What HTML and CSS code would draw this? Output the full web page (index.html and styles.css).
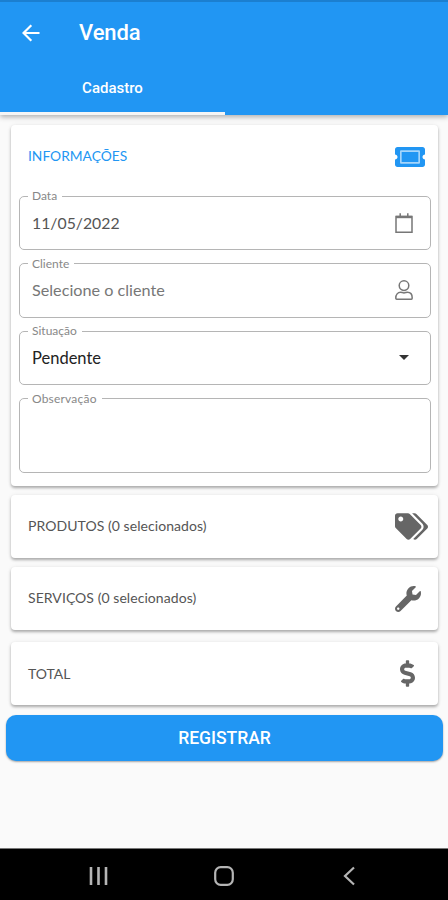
FILE: index.html
```html
<!DOCTYPE html>
<html lang="pt-BR">
<head>
<meta charset="utf-8">
<title>Venda</title>
<link rel="stylesheet" href="styles.css">
</head>
<body>
<header class="appbar">
  <div class="toolbar">
    <svg class="back" viewBox="0 0 18 18"><path d="M17.5 9H2M9.3 1.2 1.5 9l7.8 7.8" fill="none" stroke="currentColor" stroke-width="2.2"/></svg>
    <h1>Venda</h1>
  </div>
  <div class="tabs"><div class="tab">Cadastro</div></div>
</header>
<main>
  <section class="card form">
    <div class="cardhead">
      <h2>INFORMAÇÕES</h2>
      <svg class="ticket" viewBox="0 64 576 384" preserveAspectRatio="none"><path fill="#a5d5fb" d="M90 120h396v272H90z"/><path fill="currentColor" d="M128 160h320v192H128V160zm400 96c0 26.51 21.49 48 48 48v96c0 26.51-21.49 48-48 48H48c-26.51 0-48-21.49-48-48v-96c26.51 0 48-21.49 48-48s-21.49-48-48-48v-96c0-26.51 21.49-48 48-48h480c26.51 0 48 21.49 48 48v96c-26.51 0-48 21.49-48 48zm-48-104c0-13.255-10.745-24-24-24H120c-13.255 0-24 10.745-24 24v208c0 13.255 10.745 24 24 24h336c13.255 0 24-10.745 24-24V152z"/></svg>
    </div>
    <fieldset class="field">
      <legend>Data</legend>
      <div class="row"><span class="value date">11/05/2022</span>
      <svg class="fieldicon" viewBox="0 0 18 20"><path d="M1 3.5h16v15.7H1zM5.2.3v3.2M12.8.3v3.2" fill="none" stroke="currentColor" stroke-width="1.5"/><path d="M1 2.800h16v2.400H1z" fill="currentColor"/></svg></div>
    </fieldset>
    <fieldset class="field">
      <legend>Cliente</legend>
      <div class="row"><span class="value hint">Selecione o cliente</span>
      <svg class="fieldicon" viewBox="0 0 18 20"><g fill="none" stroke="currentColor" stroke-width="1.5"><circle cx="9" cy="5.6" r="4.8"/><path d="M2.2 19.3c-.9 0-1.4-.5-1.4-1.4 0-3.3 1.9-5.6 4.8-5.6 1.3 0 2 .6 3.4.6s2.100-.6 3.400-.6c2.900 0 4.800 2.300 4.800 5.600 0 .9-.5 1.400-1.400 1.400z"/></g></svg></div>
    </fieldset>
    <fieldset class="field">
      <legend>Situação</legend>
      <div class="row"><span class="value dark">Pendente</span>
      <svg class="caret" viewBox="0 0 10 5"><path d="M0 0h10L5 5z" fill="currentColor"/></svg></div>
    </fieldset>
    <fieldset class="field area">
      <legend class="wide">Observação</legend>
    </fieldset>
  </section>
  <section class="card item">
    <h3>PRODUTOS (0 selecionados)</h3>
    <svg class="tags" viewBox="0 0 640 512"><path fill="currentColor" d="M497.941 225.941L286.059 14.059A48 48 0 0 0 252.118 0H48C21.490 0 0 21.490 0 48v204.118a48 48 0 0 0 14.059 33.941l211.882 211.882c18.744 18.745 49.136 18.746 67.882 0l204.118-204.118c18.745-18.745 18.745-49.137 0-67.882zM112 160c-26.510 0-48-21.490-48-48s21.490-48 48-48 48 21.490 48 48-21.490 48-48 48zm513.941 133.823L421.823 497.941c-18.745 18.745-49.137 18.745-67.882 0l-.36-.36L527.640 323.522c16.999-16.999 26.360-39.600 26.360-63.640s-9.362-46.641-26.360-63.640L331.397 0h48.721a48 48 0 0 1 33.941 14.059l211.882 211.882c18.745 18.745 18.745 49.137 0 67.882z"/></svg>
  </section>
  <section class="card item services">
    <h3>SERVIÇOS (0 selecionados)</h3>
    <svg class="wrench" viewBox="0 0 512 512"><path fill="currentColor" d="M507.730 109.100c-2.240-9.030-13.540-12.090-20.120-5.510l-74.360 74.360-67.880-11.310-11.310-67.880 74.360-74.360c6.620-6.620 3.430-17.900-5.660-20.160-47.380-11.740-99.550.91-136.580 37.930-39.640 39.640-50.550 97.100-34.050 147.200L18.740 402.760c-24.990 24.990-24.990 65.510 0 90.500 24.990 24.990 65.510 24.990 90.500 0l213.210-213.210c50.120 16.710 107.470 5.680 147.370-34.220 37.070-37.070 49.700-89.320 37.910-136.730zM64 472c-13.250 0-24-10.750-24-24 0-13.260 10.750-24 24-24s24 10.740 24 24c0 13.250-10.750 24-24 24z"/></svg>
  </section>
  <section class="card item total">
    <h3>TOTAL</h3>
    <svg class="dollar" viewBox="0 0 288 512"><path fill="currentColor" d="M209.200 233.400l-108-31.600C88.700 198.200 80 186.500 80 173.500c0-16.300 13.200-29.500 29.500-29.500h66.300c12.200 0 24.200 3.700 34.200 10.500 6.100 4.100 14.300 3.100 19.500-2l34.800-34c7.100-6.900 6.100-18.400-1.800-24.500C238 74.800 207.400 64.100 176 64V16c0-8.800-7.200-16-16-16h-32c-8.800 0-16 7.200-16 16v48h-2.500C45.800 64-5.400 118.700.5 183.600c4.200 46.100 39.400 83.600 83.800 96.600l102.500 30c12.500 3.700 21.200 15.300 21.200 28.300 0 16.300-13.200 29.500-29.500 29.500h-66.300C100 368 88 364.300 78 357.500c-6.100-4.100-14.300-3.100-19.500 2l-34.800 34c-7.100 6.900-6.100 18.400 1.800 24.500 24.500 19.200 55.100 29.900 86.500 30v48c0 8.800 7.200 16 16 16h32c8.800 0 16-7.200 16-16v-48.200c46.600-.9 90.300-28.600 105.700-72.700 21.500-61.600-14.600-124.800-72.500-141.700z"/></svg>
  </section>
  <button class="submit">REGISTRAR</button>
</main>
<nav class="navbar">
  <svg viewBox="0 0 20 20"><path d="M2 1v18M9.500 1v18M17 1v18" stroke="currentColor" stroke-width="2.600"/></svg>
  <svg viewBox="0 0 20 20"><rect x="1.200" y="1.200" width="17.600" height="17.600" rx="5.500" fill="none" stroke="currentColor" stroke-width="2.200"/></svg>
  <svg viewBox="0 0 20 20"><path d="M15 1.500 6 10l9 8.500" fill="none" stroke="currentColor" stroke-width="2.200"/></svg>
</nav>
</body>
</html>
```
FILE: styles.css
```css
* { box-sizing: border-box; }
body {
  margin: 0;
  height: 900px;
  display: flex;
  flex-direction: column;
  background: #fafafa;
  font-family: Lato, sans-serif;
  color: #555;
  overflow: hidden;
}
svg { display: block; flex: none; }
h1, h2, h3 { margin: 0; font-weight: 400; white-space: nowrap; }

.appbar {
  height: 115px;
  flex: none;
  background: #2196f3;
  border-top: 2px solid #1b7fd0;
  color: #fff;
  font-family: Roboto, sans-serif;
  box-shadow: 0 2px 5px rgba(0, 0, 0, .3);
}
.toolbar { display: flex; align-items: center; height: 61px; padding-left: 22px; }
.back { width: 18px; height: 18px; }
h1 { font-size: 22px; font-weight: 500; margin-left: 39px; letter-spacing: -.1px; }
.tabs { height: 52px; }
.tab {
  width: 225px;
  height: 52px;
  border-bottom: 3px solid #f5f5f5;
  text-align: center;
  font-size: 15px;
  font-weight: 500;
  line-height: 50px;
}

main { flex: 1; display: flex; flex-direction: column; padding-top: 10px; }
.card {
  flex: none;
  margin: 0 10px 0 11px;
  background: #fff;
  border-radius: 4px;
  box-shadow: 0 2px 3px rgba(0, 0, 0, .3), 0 0 5px rgba(0, 0, 0, .06);
}
.form { height: 361px; padding: 0 7px 0 8px; }
.cardhead {
  height: 63px;
  display: flex;
  align-items: center;
  justify-content: space-between;
  padding: 1px 6px 0 9px;
  color: #2196f3;
}
h2 { font-size: 13.800px; padding-bottom: 4px; }
.ticket { width: 30px; height: 20px; }

.field {
  margin: 0 0 5.600px;
  padding: 0 17px 0 12px;
  height: 62px;
  min-width: 0;
  border: 1.500px solid #b5b5b5;
  border-radius: 5px;
}
.field.area { height: 82px; }
legend {
  height: 16px;
  margin-left: -4px;
  padding: 0 5px 0 4px;
  font-size: 12px;
  line-height: 16px;
  color: #888;
}
.wide { letter-spacing: .2px; }
.row { height: 37px; display: flex; align-items: center; justify-content: space-between; }
.value { font-size: 16.200px; line-height: 22px; white-space: nowrap; }
.date { font-size: 15.800px; }
.hint { color: #777; }
.dark { color: #222; font-size: 16.500px; }
.fieldicon { width: 18px; height: 20px; color: #777; }
.caret { width: 10px; height: 5px; margin-right: 4px; color: #333; }

.item {
  display: flex;
  align-items: center;
  justify-content: space-between;
  height: 63px;
  margin-top: 9px;
  padding: 0 10px 0 17px;
  color: #666;
}
h3 { font-size: 14px; color: #555; padding-bottom: 2px; letter-spacing: .06px; }
.services { padding-right: 17px; }
.total { margin-top: 12px; padding-right: 23px; }
.total h3 { padding-bottom: 1px; letter-spacing: 0; }
.tags { width: 33px; height: 27px; }
.wrench { width: 26px; height: 26px; }
.dollar { width: 15px; height: 27px; }

.submit {
  flex: none;
  height: 46px;
  margin: 10px 5px 0 6px;
  padding: 0;
  border: 0;
  border-radius: 10px;
  background: #2196f3;
  box-shadow: 0 1px 2px rgba(0, 0, 0, .35);
  color: #fff;
  font: 500 17.500px/46px Roboto, sans-serif;
}

.navbar {
  flex: none;
  height: 52px;
  display: flex;
  justify-content: space-between;
  align-items: center;
  padding: 2px 89px 0 89px;
  border-top: 1px solid #777;
  background: #000;
  color: #b5b5b5;
}
.navbar svg { width: 20px; height: 20px; }
```
